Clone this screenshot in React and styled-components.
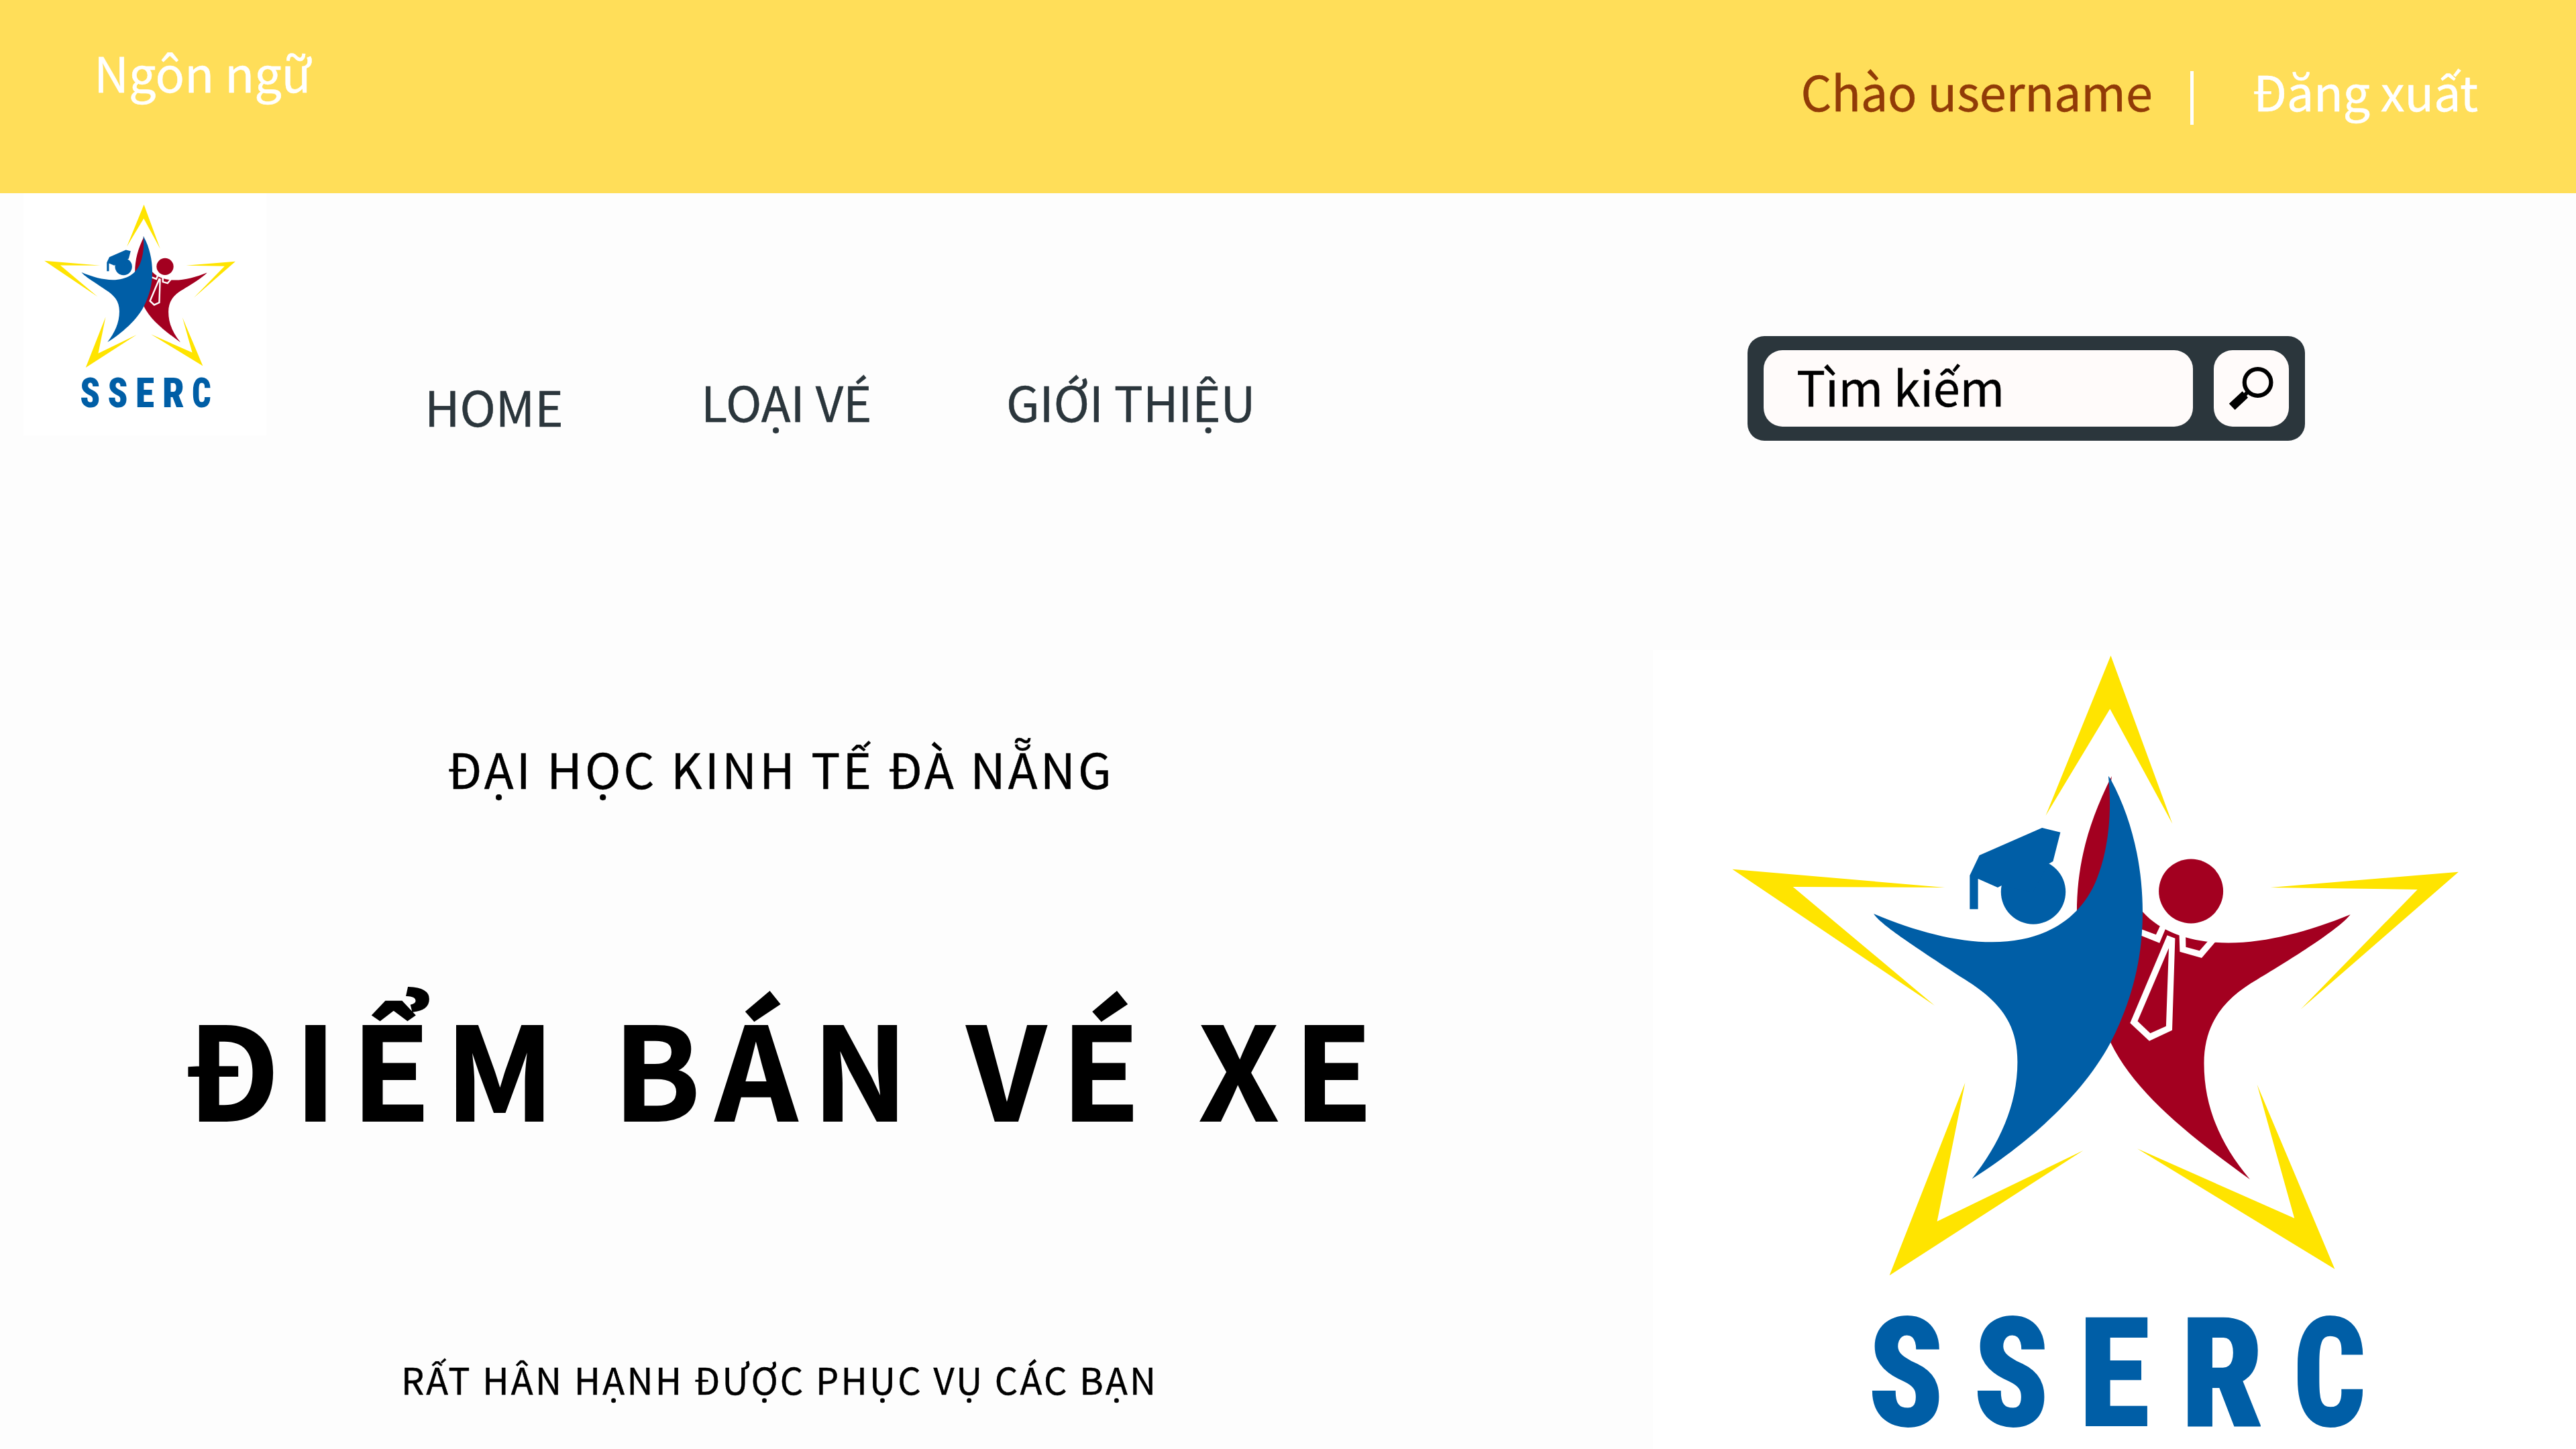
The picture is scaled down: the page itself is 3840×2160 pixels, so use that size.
import React from "react";
import styled, { createGlobalStyle } from "styled-components";

const GlobalStyle = createGlobalStyle`
  * { box-sizing: border-box; }
  body {
    margin: 0;
    background: #fdfdfd;
    font-family: "Noto Sans CJK SC", "Noto Sans", sans-serif;
  }
`;

const Page = styled.div`
  width: 3840px;
  height: 2160px;
  overflow: hidden;
  display: flex;
  flex-direction: column;
  background: #fdfdfd;
`;

const Text = styled.span`
  display: block;
  white-space: nowrap;
  line-height: 100px;
  font-size: ${(p) => p.$size || 72}px;
  font-weight: ${(p) => p.$weight || 400};
  letter-spacing: ${(p) => p.$spacing || 0}px;
  color: ${(p) => p.$color || "#000"};
  -webkit-text-stroke: ${(p) => p.$stroke || 0.5}px currentColor;
`;

const TopBar = styled.header`
  height: 288px;
  flex: none;
  display: flex;
  justify-content: space-between;
  align-items: flex-start;
  background: #ffde59;
  padding: 57px 146px 0 140px;
`;

const Account = styled.div`
  display: flex;
  align-items: flex-start;
  padding-top: 28px;
`;

const Divider = styled.i`
  width: 5px;
  height: 80px;
  margin: 21px 88px 0 56px;
  background: #fff;
`;

const NavBar = styled.div`
  height: 681px;
  flex: none;
  display: flex;
  align-items: flex-start;
  padding-left: 35px;
`;

const SmallLogo = styled.div`
  width: 362px;
  height: 361px;
  background: #fff;
  svg { display: block; width: 362px; height: 362px; }
`;

const Nav = styled.nav`
  display: flex;
  align-items: flex-start;
  width: 2208px;
  padding: 260px 0 0 236px;
`;

const NavItem = styled(Text)`
  width: ${(p) => p.$width}px;
  margin-top: ${(p) => p.$drop || 0}px;
`;

const Search = styled.div`
  display: flex;
  gap: 31px;
  width: 831px;
  height: 156px;
  margin-top: 213px;
  padding: 21px 24px;
  border-radius: 25px;
  background: #2b363c;
`;

const Field = styled.div`
  width: 640px;
  border-radius: 28px;
  background: #fffbfa;
  padding: 3px 0 0 49px;
`;

const SearchButton = styled.div`
  width: 112px;
  border-radius: 28px;
  background: #fffbfa;
  svg { display: block; width: 112px; height: 114px; }
`;

const Main = styled.main`
  flex: 1;
  display: flex;
  justify-content: space-between;
`;

const Intro = styled.section`
  width: 2328px;
  display: flex;
  flex-direction: column;
  align-items: flex-start;
  padding-top: 126px;
`;

const Heading = styled(Text)`
  padding-left: ${(p) => p.$left}px;
  margin-top: ${(p) => p.$top || 0}px;
`;

const BigLogo = styled.div`
  width: 1376px;
  height: 1191px;
  background: #fff;
  svg { display: block; width: 100%; height: 100%; }
`;

const Letter = styled.text`
  font-family: Roboto, sans-serif;
  font-size: 229px;
  font-weight: 900;
  font-stretch: condensed;
  fill: #005ea6;
`;

const LETTERS = [
  { char: "S", x: 2784, scale: 0.905 },
  { char: "S", x: 2941, scale: 0.905 },
  { char: "E", x: 3098.5, scale: 0.955 },
  { char: "R", x: 3250.5, scale: 0.96 },
  { char: "C", x: 3418, scale: 0.832 },
];

function Logo({ viewBox }) {
  return (
    <svg viewBox={viewBox}>
      <g fill="#ffe400">
        <path d="M3146.5 977.3 L3238.4 1228 L3145.3 1056.7 L3049.4 1216 Z" />
        <path d="M2582.4 1295.7 L2899.2 1323 L2672.7 1322 L2884 1499 Z" />
        <path d="M3664.9 1299.7 L3384.5 1323 L3603.7 1326 L3429.4 1504.7 Z" />
        <path d="M2816.6 1901.3 L2929.4 1614 L2887.6 1820.7 L3105.4 1715 Z" />
        <path d="M3480.4 1891.7 L3364.6 1616.7 L3420.2 1816 L3186 1712.3 Z" />
      </g>
      <g fill="#a30020">
        <path d="M3147.8 1157 C3112 1228 3096 1290 3095.9 1360 L3150 1360 L3147 1165 Z" />
        <circle cx="3266.1" cy="1328.5" r="48" />
        <path d="M3180 1342 L3193.9 1359 C3225 1394 3275 1405.5 3322 1405.5 C3380 1405.5 3443 1388 3503.7 1363.3 C3487 1385 3415 1430 3365 1460 C3316 1488 3285.5 1525 3285.5 1585 C3285.5 1650 3310 1706 3353.9 1758 C3262 1692 3182 1628 3146.2 1554 L3160 1450 Z" />
      </g>
      <g fill="#fff">
        <path fillRule="evenodd" d="M3230.6 1394.3 L3242.4 1398.7 L3238 1535.7 L3203.9 1551.7 L3175.3 1525 Z M3233 1413.3 L3228.9 1529.7 L3205.4 1540.3 L3186.5 1522.3 Z" />
        <path d="M3185 1382.6 L3213.9 1393.3 L3221.5 1377 L3230 1380 L3219.2 1405.7 L3185 1392 Z" />
        <path d="M3248.4 1388 L3258 1390 L3258.4 1411.7 L3278.8 1417.3 L3293 1401 L3305 1401 L3282 1428 L3249.4 1418.7 Z" />
      </g>
      <g fill="#005ea6">
        <path d="M3142.9 1156.7 C3149 1215 3142 1270 3125 1312 C3102 1368 3050 1404.3 2970 1404.3 C2915 1404.3 2855 1388 2793 1362 C2803 1377 2840 1402 2929 1460 C2978 1491 3007.4 1523 3007.4 1583 C3007.4 1648 2980 1706 2939.6 1757.3 C2995 1722 3095 1650 3146.2 1554 C3175 1498 3194 1435 3194 1360 C3194 1290 3178 1220 3147 1163 L3145.3 1160 Z" />
        <circle cx="3031" cy="1329.5" r="48.2" />
        <path d="M3044.1 1234 L3071.4 1240.7 L3060.4 1284 L3053.9 1287.7 L3030 1330 L2983.7 1320 L2978 1323 L2948.6 1310 L2948.6 1355.3 L2936.3 1355.3 L2936.3 1305 L2950.6 1275 Z" />
      </g>
      {LETTERS.map((l, i) => (
        <Letter key={i} transform={`translate(${l.x} 2126) scale(${l.scale} 1)`}>
          {l.char}
        </Letter>
      ))}
    </svg>
  );
}

export default function App() {
  return (
    <>
      <GlobalStyle />
      <Page>
        <TopBar>
          <Text $color="#fff">Ngôn ngữ</Text>
          <Account>
            <Text $color="#913b07" $spacing={-0.15}>Chào username</Text>
            <Divider />
            <Text $color="#fff" $spacing={-0.25}>Đăng xuất</Text>
          </Account>
        </TopBar>
        <NavBar>
          <SmallLogo>
            <Logo viewBox="2464 913 1376 1376" />
          </SmallLogo>
          <Nav>
            <NavItem $width={412} $drop={7} $color="#2b363c">HOME</NavItem>
            <NavItem $width={455} $color="#2b363c">LOẠI VÉ</NavItem>
            <NavItem $color="#2b363c" $spacing={-0.1}>GIỚI THIỆU</NavItem>
          </Nav>
          <Search>
            <Field>
              <Text $spacing={-0.25}>Tìm kiếm</Text>
            </Field>
            <SearchButton>
              <svg viewBox="3300 522 112 114">
                <circle cx="3365.6" cy="570" r="19.8" fill="none" stroke="#000" strokeWidth="6.2" />
                <path d="M3342.7 583.3 L3345 586 L3349 582 L3353 586 L3349 590 L3351 592.7 L3331.6 611 L3322.8 601.7 Z" />
              </svg>
            </SearchButton>
          </Search>
        </NavBar>
        <Main>
          <Intro>
            <Heading $left={667} $spacing={4.2}>ĐẠI HỌC KINH TẾ ĐÀ NẴNG</Heading>
            <Heading $left={275} $size={191} $weight={700} $spacing={22.1} $stroke={1.8} $top={343}>ĐIỂM BÁN VÉ XE</Heading>
            <Heading $left={598} $size={54} $spacing={3.29} $top={368}>RẤT HÂN HẠNH ĐƯỢC PHỤC VỤ CÁC BẠN</Heading>
          </Intro>
          <BigLogo>
            <Logo viewBox="2464 969 1376 1191" />
          </BigLogo>
        </Main>
      </Page>
    </>
  );
}
